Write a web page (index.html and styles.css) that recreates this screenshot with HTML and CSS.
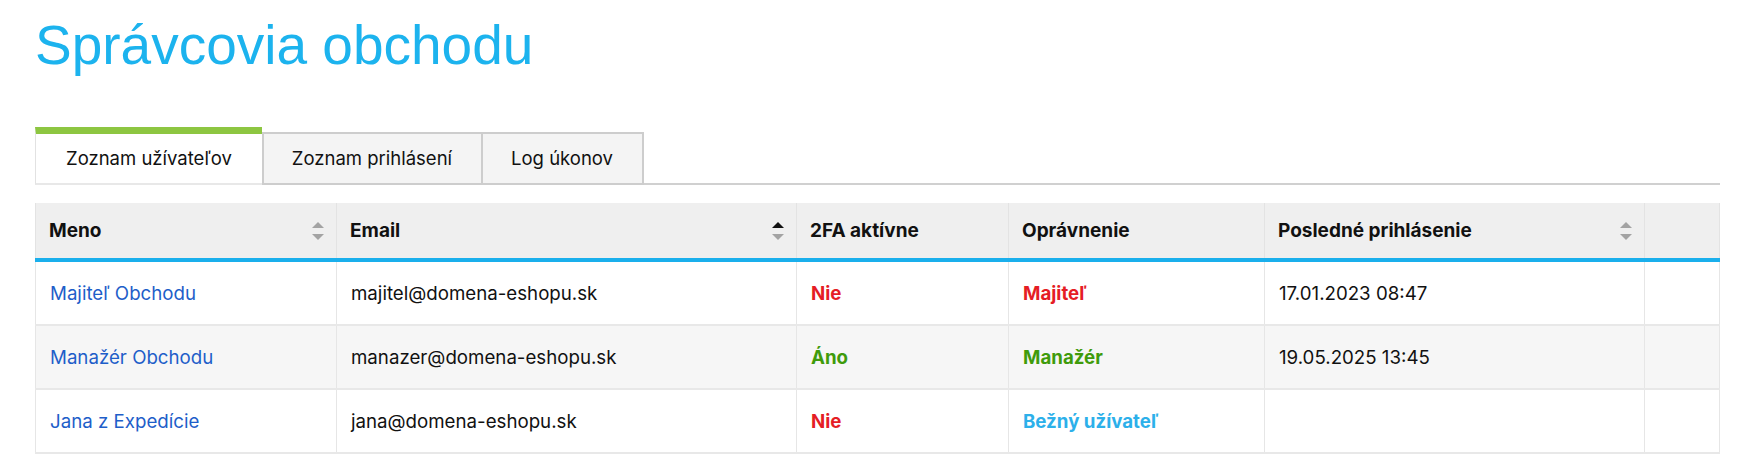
FILE: index.html
```html
<!DOCTYPE html>
<html lang="sk">
<head>
    <meta charset="UTF-8">
    <meta name="viewport" content="width=device-width, initial-scale=1.0">
    <title>Správcovia obchodu</title>
    <link rel="stylesheet" href="styles.css">
</head>
<body>

    <h1 class="page-title">Správcovia obchodu</h1>

    <!-- Záložky -->
    <ul class="tabs">
        <li class="tab active">Zoznam užívateľov</li>
        <li class="tab">Zoznam prihlásení</li>
        <li class="tab last">Log úkonov</li>
    </ul>

    <table class="users">
        <colgroup>
            <col class="c-name">
            <col class="c-email">
            <col class="c-2fa">
            <col class="c-role">
            <col class="c-login">
            <col class="c-actions">
        </colgroup>
        <thead>
            <tr>
                <th>
                    <div class="th-inner">
                        <span>Meno</span>
                        <svg class="sort" width="12" height="18" viewBox="0 0 12 18"><path d="M6 0 L12 6 L0 6 Z" fill="#a3a3a3"/><path d="M0 12 L12 12 L6 18 Z" fill="#a3a3a3"/></svg>
                    </div>
                </th>
                <th>
                    <div class="th-inner">
                        <span>Email</span>
                        <svg class="sort" width="12" height="18" viewBox="0 0 12 18"><path d="M6 0 L12 6 L0 6 Z" fill="#111"/><path d="M0 12 L12 12 L6 18 Z" fill="#a3a3a3"/></svg>
                    </div>
                </th>
                <th>2FA aktívne</th>
                <th>Oprávnenie</th>
                <th>
                    <div class="th-inner">
                        <span>Posledné prihlásenie</span>
                        <svg class="sort" width="12" height="18" viewBox="0 0 12 18"><path d="M6 0 L12 6 L0 6 Z" fill="#a3a3a3"/><path d="M0 12 L12 12 L6 18 Z" fill="#a3a3a3"/></svg>
                    </div>
                </th>
                <th></th>
            </tr>
        </thead>
        <tbody>
            <tr>
                <td><a href="#" class="user-link">Majiteľ Obchodu</a></td>
                <td>majitel@domena-eshopu.sk</td>
                <td class="no">Nie</td>
                <td class="role-owner">Majiteľ</td>
                <td>17.01.2023 08:47</td>
                <td></td>
            </tr>
            <tr>
                <td><a href="#" class="user-link">Manažér Obchodu</a></td>
                <td>manazer@domena-eshopu.sk</td>
                <td class="yes">Áno</td>
                <td class="role-manager">Manažér</td>
                <td>19.05.2025 13:45</td>
                <td></td>
            </tr>
            <tr>
                <td><a href="#" class="user-link">Jana z Expedície</a></td>
                <td>jana@domena-eshopu.sk</td>
                <td class="no">Nie</td>
                <td class="role-user">Bežný užívateľ</td>
                <td></td>
                <td></td>
            </tr>
        </tbody>
    </table>

</body>
</html>
```

FILE: styles.css
```css
body {
    font-family: Inter, "Noto Sans", sans-serif;
    background: #fff;
    color: #111;
    margin: 0;
    padding: 0 33px 0 35px;
}

.page-title {
    font-family: "Liberation Sans", Arial, sans-serif;
    font-size: 55px;
    font-weight: normal;
    line-height: normal;
    color: #1cb3ee;
    margin: 13px 0 50px;
}

/* Záložky */
.tabs {
    list-style: none;
    margin: 0;
    padding: 0;
    display: flex;
    align-items: flex-end;
    border-bottom: 2px solid #d0d0d0;
}

.tab {
    font-size: 18.5px;
    line-height: 49px;
    height: 49px;
    padding: 0 29px 0 28px;
    background: #f4f4f4;
    border-top: 2px solid #cdcdcd;
    border-left: 2px solid #cdcdcd;
    margin-bottom: -2px;
    border-bottom: 2px solid #cdcdcd;
    cursor: pointer;
}

.tab.last {
    border-right: 2px solid #cdcdcd;
}

.tab.active {
    background: #fff;
    border-top: 7px solid #8dc641;
    border-left: 1px solid #e2e2e2;
    border-bottom: 2px solid #e8e8e8;
    padding: 0 30px 0 30px;
}

/* Tabuľka */
.users {
    width: 100%;
    margin-top: 18px;
    border-collapse: collapse;
    table-layout: fixed;
    font-size: 18.7px;
}

.c-name { width: 301px; }
.c-email { width: 460px; }
.c-2fa { width: 212px; }
.c-role { width: 256px; }
.c-login { width: 380px; }

.users th {
    background: #efefef;
    height: 55px;
    padding: 0 12px 0 13px;
    text-align: left;
    font-size: 19px;
    font-weight: 700;
    border-left: 1px solid #e3e3e3;
    border-right: 1px solid #e3e3e3;
    border-bottom: 4px solid #1aafec;
}

.th-inner {
    display: flex;
    align-items: center;
    justify-content: space-between;
}

.sort {
    display: block;
}

.users td {
    height: 62px;
    padding: 0 13px 0 14px;
    border-left: 1px solid #e6e6e6;
    border-right: 1px solid #e6e6e6;
    border-bottom: 2px solid #e8e8e8;
    white-space: nowrap;
}

.users tbody tr:nth-child(even) td {
    background: #f6f6f6;
}

.user-link {
    color: #1e5ec9;
    text-decoration: none;
}

.no, .yes, .role-owner, .role-manager, .role-user {
    font-weight: 700;
}

.no, .role-owner {
    color: #e51d25;
}

.yes, .role-manager {
    color: #3f9b0b;
}

.role-user {
    color: #2cb0ea;
}
```
